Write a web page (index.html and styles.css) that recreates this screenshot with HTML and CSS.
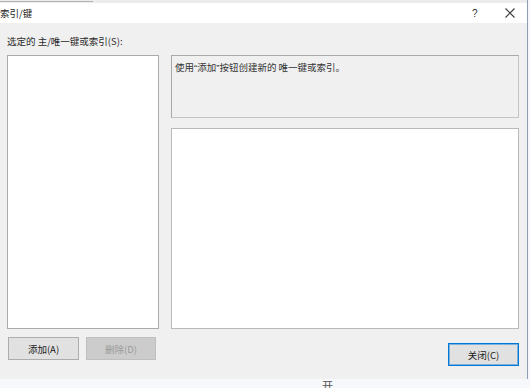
FILE: index.html
```html
<!DOCTYPE html>
<html lang="zh-CN">
<head>
    <meta charset="UTF-8" />
    <title>索引/键</title>
    <link rel="stylesheet" href="styles.css">
</head>
<body>
    <div class="window">
        <div class="top-strip"><span class="tab-line"></span></div>

        <div class="title-bar">
            <span class="title">索引/键</span>
            <span class="help">?</span>
            <span class="close-x">
                <svg width="10" height="10" viewBox="0 0 10 10">
                    <path d="M0.5 0.5 L9.5 9.5 M9.5 0.5 L0.5 9.5" stroke="#3a3a3a" stroke-width="1.1" fill="none" />
                </svg>
            </span>
        </div>

        <div class="dialog">
            <div class="label"><span>选定的 主/唯一键或索引(S):</span></div>

            <div class="listbox"></div>

            <div class="right-col">
                <div class="info-box">使用<span class="q">“</span>添加<span class="q">”</span>按钮创建新的 唯一键或索引。</div>
                <div class="detail-box"></div>
            </div>

            <div class="left-buttons">
                <button class="btn">添加(A)</button>
                <button class="btn btn-disabled" disabled>删除(D)</button>
            </div>

            <div class="right-buttons">
                <button class="btn btn-default">关闭(C)</button>
            </div>
        </div>
    </div>

    <div class="below">开</div>
</body>
</html>
```

FILE: styles.css
```css
/* Page */
body {
    margin: 0;
    background-color: #f7f8fb;
    font-family: "Noto Sans CJK SC", "Noto Sans", "Liberation Sans", sans-serif;
    font-size: 9.5px;
    color: #1a1a1a;
    overflow: hidden;
    height: 388px;
}

/* Dialog window, left edge cut off */
.window {
    width: 527px;
    border-right: 1px solid #8e9db0;
    background-color: #f0f0f0;
}

.top-strip {
    height: 3px;
    background-color: #ececec;
    position: relative;
}

.tab-line {
    display: block;
    width: 93px;
    height: 1px;
    background-color: #b4b4b4;
    position: absolute;
    left: 0;
    bottom: 1px;
}

/* Title bar */
.title-bar {
    height: 20px;
    background-color: #ffffff;
    display: flex;
    align-items: center;
}

.title {
    flex: 1;
    color: #222;
    line-height: 14px;
}

.help {
    width: 10px;
    margin-right: 23px;
    font-family: "Liberation Sans", sans-serif;
    font-size: 10px;
    color: #333;
}

.close-x {
    width: 10px;
    height: 10px;
    margin-right: 12px;
    display: flex;
}

/* Dialog body */
.dialog {
    height: 356px;
    box-sizing: border-box;
    padding: 11px 8px 0 7px;
    display: grid;
    grid-template-columns: 152px 348px;
    grid-template-rows: 14px 274px auto;
    column-gap: 12px;
    row-gap: 7px;
}

.label {
    grid-column: 1 / 3;
    line-height: 14px;
    color: #2a2a2a;
}

.listbox {
    grid-column: 1;
    grid-row: 2;
    background-color: #ffffff;
    border: 1px solid #ababab;
}

.right-col {
    grid-column: 2;
    grid-row: 2;
    display: flex;
    flex-direction: column;
    gap: 10px;
}

.info-box {
    height: 63px;
    box-sizing: border-box;
    border: 1px solid #a9a9a9;
    border-right-color: #c4c4c4;
    border-bottom-color: #c4c4c4;
    background-color: #f0f0f0;
    padding: 4px 3px;
    line-height: 14px;
    color: #333;
}

.q {
    font-family: "Liberation Sans", sans-serif;
}

.detail-box {
    flex: 1;
    background-color: #ffffff;
    border: 1px solid #b9b9b9;
}

/* Buttons */
.left-buttons {
    grid-column: 1;
    grid-row: 3;
    display: flex;
    gap: 7px;
    padding-top: 1px;
    padding-left: 1px;
}

.right-buttons {
    grid-column: 2;
    grid-row: 3;
    display: flex;
    justify-content: flex-end;
    padding-top: 7px;
}

.btn {
    width: 71px;
    height: 23px;
    border: 1px solid #adadad;
    background-color: #e1e1e1;
    font-family: inherit;
    font-size: 9.5px;
    color: #1a1a1a;
    padding: 0;
}

.btn-disabled {
    width: 70px;
    background-color: #cccccc;
    border-color: #bfbfbf;
    color: #9a9a9a;
}

.btn-default {
    border-color: #0078d7;
    box-shadow: inset 0 0 0 1px rgba(0, 120, 215, 0.45);
}

/* Strip below the dialog */
.below {
    padding: 0 0 0 322px;
    font-size: 11px;
    line-height: 13px;
    color: #555;
}
```
